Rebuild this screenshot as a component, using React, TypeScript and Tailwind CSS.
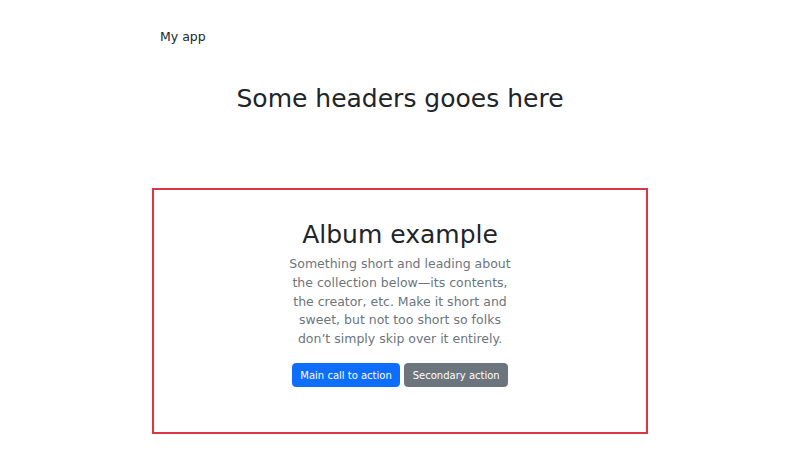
import React from 'react';

// Página simples no estilo do "Album example" do Bootstrap

const App: React.FC = () => {
  return (
    <div
      className="flex min-h-[450px] w-full flex-col items-center bg-white text-[#212529]"
      style={{ fontFamily: '"DejaVu Sans", sans-serif' }}
    >
      {/* NAV */}
      <nav className="w-[496px] px-2 pt-[24px]">
        <span className="text-[12.5px] leading-[18.75px]">My app</span>
      </nav>

      {/* HEADER */}
      <h1 className="mt-[36px] text-[25px] leading-[30px] font-normal">Some headers gooes here</h1>

      {/* ALBUM */}
      <section className="mt-[74px] flex h-[246px] w-[496px] flex-col items-center border-2 border-[#dc3545] pt-[30px] text-center">
        <h1 className="mb-[5px] text-[25px] leading-[30px] font-normal">Album example</h1>
        <p className="mb-[9px] w-[232px] text-[12.5px] leading-[18.75px] text-[#6c757d]">
          Something short and leading about the collection below—its contents, the creator, etc. Make it short and
          sweet, but not too short so folks don’t simply skip over it entirely.
        </p>
        <div className="my-[5px] flex gap-1">
          <button className="rounded-[3.75px] border border-[#0d6efd] bg-[#0d6efd] px-[7.5px] py-[3.75px] text-[10px] leading-[15px] text-white">
            Main call to action
          </button>
          <button className="rounded-[3.75px] border border-[#6c757d] bg-[#6c757d] px-[7.5px] py-[3.75px] text-[10px] leading-[15px] text-white">
            Secondary action
          </button>
        </div>
      </section>
    </div>
  );
};

export default App;
